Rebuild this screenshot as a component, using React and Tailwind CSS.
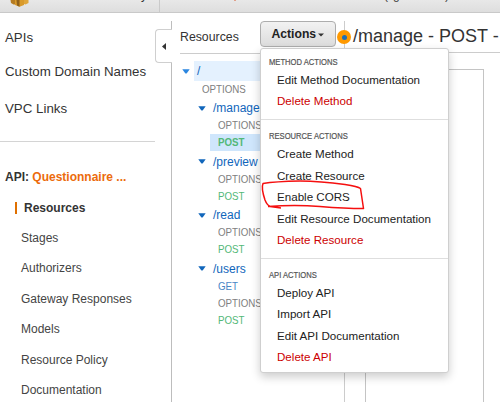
import React from "react";

const NAV = ["Stages", "Authorizers", "Gateway Responses", "Models", "Resource Policy", "Documentation"];

const MENU = [
  { title: "METHOD ACTIONS", items: ["Edit Method Documentation", "Delete Method"] },
  {
    title: "RESOURCE ACTIONS",
    items: ["Create Method", "Create Resource", "Enable CORS", "Edit Resource Documentation", "Delete Resource"],
  },
  { title: "API ACTIONS", items: ["Deploy API", "Import API", "Edit API Documentation", "Delete API"] },
];

const TREE = [
  { path: "/manage", methods: ["OPTIONS", "POST"], selected: "POST" },
  { path: "/preview", methods: ["OPTIONS", "POST"] },
  { path: "/read", methods: ["OPTIONS", "POST"] },
  { path: "/users", methods: ["GET", "OPTIONS", "POST"] },
];

const METHOD_COLOR = { OPTIONS: "text-[#808080]", POST: "text-[#52b878]", GET: "text-[#4a86c5]" };

function Caret({ className }) {
  return (
    <svg className={className} width="8" height="5" viewBox="0 0 8 5">
      <path d="M0.3 0.3H7.7L4.8 4.2Q4 5 3.2 4.2Z" fill="currentColor" />
    </svg>
  );
}

function TopBar() {
  return (
    <header className="relative h-[13px] shrink-0 overflow-hidden border-b border-[#c9c9c9] bg-linear-to-b from-[#e8e8e8] to-[#dedede]">
      <svg className="absolute left-[10px] top-0" width="19" height="7" viewBox="0 0 19 7">
        <path d="M0.500 0H5V4.500L3.500 4.500L1 3Z" fill="#b57c22" />
        <path d="M5 0H14V5L9.500 6.800L5 5Z" fill="#d99a2b" />
        <path d="M6.500 0H9.500V6.800L7 5.500Z" fill="#8f611b" />
        <path d="M14 0H18.500V3L15.500 4.500L14 4Z" fill="#e0a63a" />
      </svg>
      <span className="absolute left-[141px] top-[-12px] text-[12px] leading-[14px]">y</span>
      <div className="absolute left-[159px] top-0 h-[12px] w-px bg-[#cacaca]" />
      <div className="absolute left-[234px] top-0 h-px w-[2px] bg-[#e0a08a]" />
      <div className="absolute left-[384px] top-[-12px] flex w-[65px] text-[12px] leading-[14px] text-[#444]">
        <span>(</span>
        <span className="ml-[5px]">g</span>
        <span className="ml-auto">)</span>
      </div>
    </header>
  );
}

function Sidebar() {
  return (
    <aside className="flex w-[171px] shrink-0 flex-col">
      <div className="mr-[16px] h-[129px] shrink-0 border-b border-[#d4d4d4] pl-[5px] pt-[16px] text-[13.3px] leading-[18px]">
        <div>APIs</div>
        <div className="mt-[16px]">Custom Domain Names</div>
        <div className="mt-[19px]">VPC Links</div>
      </div>
      <div className="mt-[27px] shrink-0 pl-[5px] text-[12px] font-bold leading-[16px]">
        API: <span className="text-[#ec6b0c]">Questionnaire ...</span>
      </div>
      <div className="ml-[15px] mt-[17px] flex h-[12px] shrink-0 items-center border-l-2 border-[#e07000] pl-[7px] text-[12px] font-bold">
        Resources
      </div>
      <ul className="mt-[9px] pl-[21px] text-[12px] leading-[30.4px] text-[#444]">
        {NAV.map((n) => (
          <li key={n}>{n}</li>
        ))}
      </ul>
    </aside>
  );
}

function Tree() {
  return (
    <div className="text-[12px] text-[#1166bb]">
      <div className="flex h-[20px] items-center">
        <Caret className="ml-[2px] mr-[4px] text-[#2a86e0]" />
        <div className="flex h-[20px] flex-1 items-center bg-[#e4f1fe] pl-[3px]">/</div>
      </div>
      <div className="h-[17px] pl-[22px] text-[10.6px] leading-[17px] text-[#808080]">
        <span className="inline-block origin-left scale-x-[0.92]">OPTIONS</span>
      </div>
      {TREE.map((r) => (
        <div key={r.path} className="pt-[1.4px]">
          <div className="flex h-[18px] items-center">
            <Caret className="ml-[18px] mr-[7px]" />
            {r.path}
          </div>
          {r.methods.map((m) => (
            <div key={m} className="h-[17px] pl-[38px] text-[10.6px] leading-[17px]">
              <div className={r.selected === m ? "-ml-2 bg-[#cfe6fc] pl-2 font-bold" : ""}>
                <span className={"inline-block origin-left scale-x-[0.92] " + METHOD_COLOR[m]}>{m}</span>
              </div>
            </div>
          ))}
        </div>
      ))}
    </div>
  );
}

function ActionsMenu() {
  return (
    <div className="absolute left-[260px] top-[48px] h-[325px] w-[189px] rounded-[3px] border border-[#cfcfcf] bg-white pt-[8px] shadow-[0_4px_10px_rgba(0,0,0,0.2)]">
      {MENU.map((g, i) => (
        <div key={g.title} className={i ? "mt-[7.5px] border-t border-[#dedede] pt-[11px]" : ""}>
          <div className="pb-[2px] pl-[8px] text-[8.4px] leading-[10px] text-[#555]">
            <span className="inline-block origin-left scale-x-[0.91] whitespace-nowrap [-webkit-text-stroke:0.2px]">
              {g.title}
            </span>
          </div>
          {g.items.map((t) => (
            <div
              key={t}
              className={
                "whitespace-nowrap pl-[16px] text-[11.6px] leading-[21.4px] " +
                (t.startsWith("Delete") ? "text-[#cc0000]" : "text-[#222]")
              }
            >
              {t}
            </div>
          ))}
        </div>
      ))}
    </div>
  );
}

export default function App() {
  return (
    <div className="relative flex h-[402px] w-[500px] flex-col overflow-hidden bg-white font-['Liberation_Sans',Arial,sans-serif] text-[#333]">
      <TopBar />
      <div className="flex min-h-0 flex-1">
        <Sidebar />
        <main className="flex flex-1 pt-[8px]">
          <section className="w-[173px] border-l border-[#bdbdbd] pl-[8px]">
            <div className="flex h-[33px] items-center border-b border-[#cccccc] text-[12.3px]">
              <span className="mt-[1px]">Resources</span>
              <button className="ml-[21px] mt-[-6px] flex h-[26px] w-[76px] shrink-0 items-center justify-center rounded-[4px] border border-[#adadad] bg-linear-to-b from-[#f2f2f2] to-[#dcdcdc] text-[12.2px] font-bold text-[#222]">
                Actions
                <svg className="ml-[2px] mt-[1px]" width="6" height="4" viewBox="0 0 6 4">
                  <path d="M0 0.5H6L3 3.5Z" fill="#333" />
                </svg>
              </button>
            </div>
            <div className="mt-[7px]">
              <Tree />
            </div>
          </section>
          <section className="flex flex-1 flex-col border-l border-[#cccccc]">
            <div className="flex h-[32px] items-center whitespace-nowrap border-b border-[#cccccc] pl-[8px] text-[18px]">
              /manage - POST -
            </div>
            <div className="ml-[20px] mt-[16px] w-[119px] flex-1 border-x border-t border-[#c4c4c4]" />
          </section>
        </main>
      </div>
      <div className="absolute left-[155px] top-[29px] flex h-[34px] w-[17px] items-center rounded-l-[4px] border border-r-0 border-[#cfcfcf] bg-white pl-[6px]">
        <svg width="4" height="7" viewBox="0 0 4 7">
          <path d="M4 0V7L0 3.5Z" fill="#333" />
        </svg>
      </div>
      <div className="absolute left-[337px] top-[30px] flex size-[14px] items-center justify-center rounded-full bg-[#ff9900]">
        <div className="size-[5px] rounded-full bg-[#1f6fb5]" />
      </div>
      <ActionsMenu />
      <svg className="absolute left-[255px] top-[175px]" width="115" height="40" viewBox="255 175 115 40" fill="none">
        <path
          d="M281 208L270 206.500Q267 205 265 200Q261 188 263 183.500Q275 181.500 300 181Q320 181 345 184.500Q358 186.500 360.500 188.500L363.500 208.500Q345 208.500 320 206.500Q295 204.500 268 206.500"
          stroke="#f50f0f"
          strokeWidth="1.5"
          strokeLinejoin="round"
        />
      </svg>
    </div>
  );
}
